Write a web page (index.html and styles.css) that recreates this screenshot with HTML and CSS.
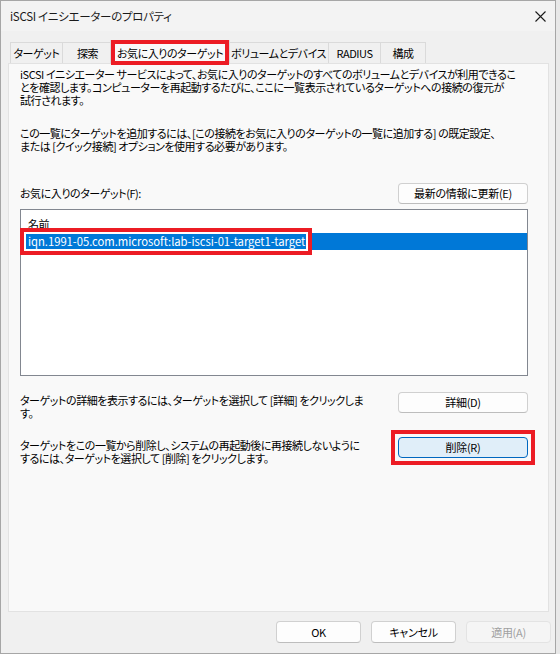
FILE: index.html
```html
<!DOCTYPE html>
<html lang="ja">
<head>
<meta charset="utf-8">
<title>iSCSI イニシエーターのプロパティ</title>
<link rel="stylesheet" href="styles.css">
</head>
<body>
<div class="window">
  <div class="titlebar">
    <span class="title">iSCSI イニシエーターのプロパティ</span>
    <span class="close"><svg width="11" height="11" viewBox="0 0 11 11"><path d="M0.5 0.5 L10.5 10.5 M10.5 0.5 L0.5 10.5" stroke="#1a1a1a" stroke-width="1.1" fill="none"/></svg></span>
  </div>
  <div class="tabs">
    <div class="tab t1">ターゲット</div>
    <div class="tab t2">探索</div>
    <div class="tab t3 active">お気に入りのターゲット</div>
    <div class="tab t4">ボリュームとデバイス</div>
    <div class="tab t5">RADIUS</div>
    <div class="tab t6">構成</div>
  </div>
  <div class="panel">
    <p class="desc">iSCSI イニシエーター サービスによって、お気に入りのターゲットのすべてのボリュームとデバイスが利用できるこ<br>とを確認します。コンピューターを再起動するたびに、ここに一覧表示されているターゲットへの接続の復元が<br>試行されます。</p>
    <p class="desc second">この一覧にターゲットを追加するには、[この接続をお気に入りのターゲットの一覧に追加する] の既定設定、<br>または [クイック接続] オプションを使用する必要があります。</p>
    <div class="list-head">
      <span>お気に入りのターゲット(F):</span>
      <button class="btn">最新の情報に更新(E)</button>
    </div>
    <div class="listbox">
      <div class="col-head">名前</div>
      <div class="row sel"><span class="mark">iqn.1991-05.com.microsoft:lab-iscsi-01-target1-target</span></div>
    </div>
    <div class="action first">
      <p class="action-text">ターゲットの詳細を表示するには、ターゲットを選択して [詳細] をクリックしま<br>す。</p>
      <button class="btn">詳細(D)</button>
    </div>
    <div class="action">
      <p class="action-text">ターゲットをこの一覧から削除し、システムの再起動後に再接続しないように<br>するには、ターゲットを選択して [削除] をクリックします。</p>
      <button class="btn default marked">削除(R)</button>
    </div>
  </div>
  <div class="footer">
    <button class="btn small">OK</button>
    <button class="btn small">キャンセル</button>
    <button class="btn small disabled">適用(A)</button>
  </div>
</div>
</body>
</html>
```
FILE: styles.css
```css
* { box-sizing: border-box; }
body {
  margin: 0;
  background: #e8e8e8;
  font-family: "Noto Sans CJK JP", "Noto Sans", sans-serif;
  font-size: 11px;
  letter-spacing: -0.45px;
  color: #000;
  font-feature-settings: "palt";
}
.window {
  width: 556px;
  height: 654px;
  border: 1px solid #a6a6a6;
  background: #f0f0f0;
  display: flex;
  flex-direction: column;
}
.titlebar {
  height: 30px;
  flex: none;
  display: flex;
  align-items: center;
  justify-content: space-between;
  padding: 0 9px 0 9px;
  background: #f3f3f3;
}
.title { font-size: 11.5px; letter-spacing: -0.3px; color: #1a1a1a; }
.close { display: flex; }
.tabs {
  height: 32px;
  flex: none;
  display: flex;
  align-items: flex-end;
  padding-left: 9px;
}
.tab {
  height: 21px;
  border: 1px solid #dadada;
  border-bottom: none;
  margin-right: -1px;
  display: flex;
  align-items: center;
  justify-content: center;
  background: #f0f0f0;
  white-space: nowrap;
  flex: none;
}
.t1 { width: 53px; }
.t2 { width: 51px; }
.t3 { width: 116px; }
.t4 { width: 101px; }
.t5 { width: 53px; }
.t6 { width: 46px; }
.tab.active {
  height: 24px;
  background: #f9f9f9;
  margin: 0 -2px -1px -2px;
  width: 120px;
  position: relative;
  z-index: 1;
}
.tab.active::after {
  content: "";
  position: absolute;
  left: 0;
  right: 0;
  top: -1px;
  bottom: -1px;
  border: 4px solid #ec1c24;
}
.panel {
  flex: none;
  height: 549px;
  margin: 0 6px 0 7px;
  background: #f9f9f9;
  border: 1px solid #e2e2e2;
  padding: 4px 20px 0 11px;
}
.desc {
  margin: 0;
  line-height: 13px;
  white-space: nowrap;
}
.desc.second { margin-top: 20px; }
.list-head {
  margin-top: 29px;
  display: flex;
  justify-content: space-between;
  align-items: center;
  height: 22px;
}
.btn {
  flex: none;
  font: inherit;
  font-feature-settings: "palt";
  letter-spacing: -0.3px;
  color: #000;
  width: 130px;
  height: 21px;
  padding: 0;
  border: 1px solid #d0d0d0;
  border-bottom-color: #bdbdbd;
  border-radius: 4px;
  background: #fdfdfd;
  line-height: 1;
}
.btn.default {
  background: #e0eef9;
  border: 1px solid #0067c0;
}
.btn.small { width: 85px; height: 22px; }
.btn.disabled {
  color: #a0a0a0;
  background: #f5f5f5;
  border-color: #e3e3e3;
}
.listbox {
  margin-top: 5px;
  height: 167px;
  border: 1px solid #828790;
  background: #fff;
}
.col-head {
  height: 23px;
  padding: 8px 0 0 7px;
  line-height: 13px;
}
.row {
  height: 17px;
  line-height: 17px;
  padding-left: 7px;
}
.row.sel {
  background: #0078d7;
  color: #fff;
  font-size: 11.3px;
  letter-spacing: -0.05px;
}
.mark { position: relative; display: inline-block; }
.mark::after {
  content: "";
  position: absolute;
  left: -8px;
  right: -7px;
  top: -5px;
  bottom: -5px;
  border: 4px solid #ec1c24;
  box-shadow: inset 0 0 0 2px #fff;
}
.action {
  display: flex;
  justify-content: space-between;
  align-items: flex-start;
  margin-top: 16px;
}
.action + .action { margin-top: 17px; }
.action-text {
  margin: 2px 0 0;
  line-height: 13px;
  white-space: nowrap;
}
.marked { position: relative; }
.marked::after {
  content: "";
  position: absolute;
  left: -8px;
  right: -8px;
  top: -8px;
  bottom: -8px;
  border: 4px solid #ec1c24;
}
.footer {
  flex: 1;
  display: flex;
  justify-content: flex-end;
  gap: 10px;
  padding: 9px 4px 0 0;
}
```
